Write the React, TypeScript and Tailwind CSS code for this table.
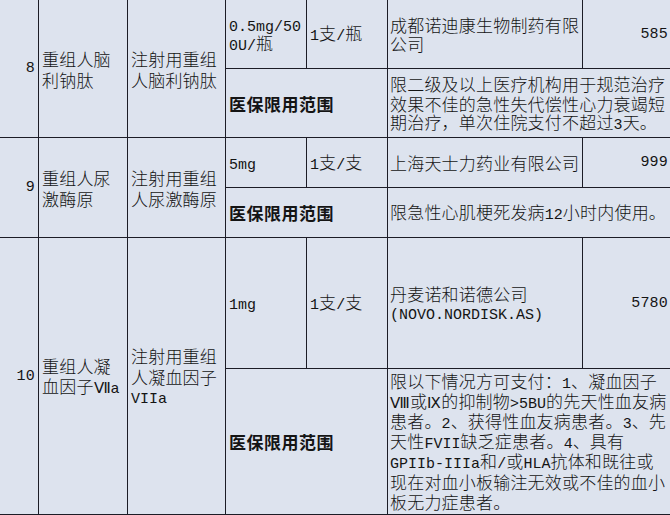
import React from 'react';

type Drug = {
  no: string;
  name: string[];
  form: string[];
  spec: string[];
  pack: string;
  company: string[];
  price: string;
  scope: string[];
  rows: string;
};

const DRUGS: Drug[] = [
  {
    no: '8',
    name: ['重组人脑', '利钠肽'],
    form: ['注射用重组', '人脑利钠肽'],
    spec: ['0.5mg/50', '0U/瓶'],
    pack: '1支/瓶',
    company: ['成都诺迪康生物制药有限', '公司'],
    price: '585',
    scope: ['限二级及以上医疗机构用于规范治疗', '效果不佳的急性失代偿性心力衰竭短', '期治疗，单次住院支付不超过3天。'],
    rows: 'grid-rows-[69px_69px]',
  },
  {
    no: '9',
    name: ['重组人尿', '激酶原'],
    form: ['注射用重组', '人尿激酶原'],
    spec: ['5mg'],
    pack: '1支/支',
    company: ['上海天士力药业有限公司'],
    price: '999',
    scope: ['限急性心肌梗死发病12小时内使用。'],
    rows: 'grid-rows-[50px_50px]',
  },
  {
    no: '10',
    name: ['重组人凝', '血因子Ⅶa'],
    form: ['注射用重组', '人凝血因子', 'VIIa'],
    spec: ['1mg'],
    pack: '1支/支',
    company: ['丹麦诺和诺德公司', '(NOVO.NORDISK.AS)'],
    price: '5780',
    scope: [
      '限以下情况方可支付：1、凝血因子',
      'Ⅷ或Ⅸ的抑制物>5BU的先天性血友病',
      '患者。2、获得性血友病患者。3、先',
      '天性FVII缺乏症患者。4、具有',
      'GPIIb-IIIa和/或HLA抗体和既往或',
      '现在对血小板输注无效或不佳的血小',
      '板无力症患者。',
    ],
    rows: 'grid-rows-[131px_146px]',
  },
];

// half-width runs (latin, digits, roman numerals) are set in a mono face like the SimSun latin
const HALF = /([\x21-\x7e\u2160-\u216f]+)/;

function Mix({ text }: { text: string }) {
  return (
    <>
      {text.split(HALF).map((p, i) =>
        i % 2 === 1 ? (
          <span key={i} className="font-['Liberation_Mono',monospace] font-normal text-[15px] tracking-normal">
            {p}
          </span>
        ) : (
          <React.Fragment key={i}>{p}</React.Fragment>
        )
      )}
    </>
  );
}

function Lines({ lines, lh }: { lines: string[]; lh: string }) {
  return (
    <div>
      {lines.map((l, i) => (
        <div key={i} className={`whitespace-nowrap flex items-center ${lh}`}>
          <span>
            <Mix text={l} />
          </span>
        </div>
      ))}
    </div>
  );
}

const cell = 'flex items-center border-r border-b border-[#1c1c26]';

export default function App() {
  return (
    <div className="w-[670px] h-[515px] overflow-hidden bg-[#dde3ee] text-[#141414] font-['Noto_Sans_CJK_SC',sans-serif] font-light text-[17px] tracking-[0.2px] leading-none">
      {DRUGS.map(d => (
        <div key={d.no} className={`grid grid-cols-[39px_89px_98px_81px_81px_195px_1fr] ${d.rows}`}>
          <div className={`${cell} row-span-2 justify-end pr-[3px]`}>
            <span className="font-['Liberation_Mono',monospace] font-normal text-[15px]">{d.no}</span>
          </div>
          <div className={`${cell} row-span-2 pl-[3px]`}>
            <Lines lines={d.name} lh="h-[21px]" />
          </div>
          <div className={`${cell} row-span-2 pl-[3px]`}>
            <Lines lines={d.form} lh="h-[21px]" />
          </div>
          <div className={`${cell} pl-[3px]`}>
            <Lines lines={d.spec} lh="h-[19px]" />
          </div>
          <div className={`${cell} pl-[3px]`}>
            <Lines lines={[d.pack]} lh="h-[19px]" />
          </div>
          <div className={`${cell} pl-[2px]`}>
            <Lines lines={d.company} lh="h-[19px]" />
          </div>
          <div className="flex items-center justify-end border-b border-[#1c1c26] pr-[2px]">
            <span className="font-['Liberation_Mono',monospace] font-normal text-[15px]">{d.price}</span>
          </div>
          <div className={`${cell} col-span-2 pl-[3px] font-bold tracking-[0.5px]`}>医保限用范围</div>
          <div className="col-span-2 flex items-center border-b border-[#1c1c26] pl-[2px]">
            <Lines lines={d.scope} lh="h-[20px]" />
          </div>
        </div>
      ))}
    </div>
  );
}
